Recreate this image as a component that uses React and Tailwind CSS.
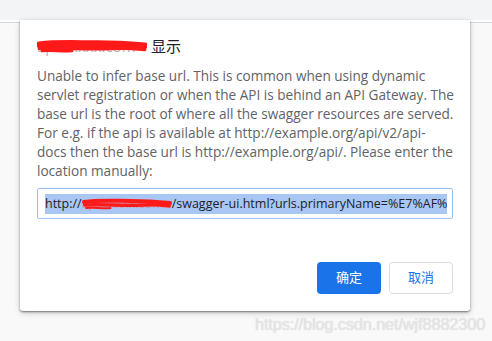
import React from "react";

const font = { fontFamily: '"Open Sans", "Noto Sans CJK SC", sans-serif' };

function Scribble({ className, thick }) {
  const w = thick ? 1.4 : 1;
  return (
    <svg className={className} viewBox="0 0 110 14" preserveAspectRatio="none">
      <path d="M2 5 C 20 3, 40 4, 60 4 S 95 5, 108 6" stroke="#ff1a1a" strokeWidth={4 * w} fill="none" strokeLinecap="round" />
      <path d="M3 8 C 25 7, 50 9, 75 8 S 100 9, 107 9" stroke="#ff1a1a" strokeWidth={3.5 * w} fill="none" strokeLinecap="round" />
      <path d="M5 11 C 15 10, 25 12, 35 11" stroke="#ff1a1a" strokeWidth={2 * w} fill="none" strokeLinecap="round" />
    </svg>
  );
}

const lines = [
  "Unable to infer base url. This is common when using dynamic",
  "servlet registration or when the API is behind an API Gateway. The",
  "base url is the root of where all the swagger resources are served.",
  "For e.g. if the api is available at http://example.org/api/v2/api-",
  "docs then the base url is http://example.org/api/. Please enter the",
  "location manually:",
];

export default function App() {
  return (
    <div className="relative w-[492px] h-[341px] overflow-hidden bg-[#f9f9f9]" style={font}>
      <div className="h-[20px] bg-[#f3f4f5]" />
      <div className="h-[3px] bg-white border-b border-[#d6d6d6]" />

      <div className="absolute left-[20px] top-[20px] w-[450px] h-[291px] bg-white rounded-b-[3px] shadow-[0_1px_2px_rgba(0,0,0,0.45),0_2px_6px_rgba(0,0,0,0.2)] flex flex-col px-[17px] pt-[16px] pb-[17px]">
        <div className="flex items-center h-[21px] text-[15px] text-[#202124] leading-[21px]">
          <span className="relative inline-block w-[110px] overflow-hidden whitespace-nowrap text-[#b0b4b8]">
            api.xxxxx.com
            <Scribble thick className="absolute left-0 top-[3px] w-[110px] h-[15px]" />
          </span>
          <span className="ml-[4px]">显示</span>
        </div>
        <div className="mt-[9px] text-[13.6px] leading-[19px] text-[#5f6368]">
          {lines.map((l) => (
            <div key={l} className="whitespace-nowrap">{l}</div>
          ))}
        </div>
        <div className="mt-[8px] h-[31px] rounded-[2px] border border-[#9ec0f2] flex items-center px-[7px] overflow-hidden">
          <span className="whitespace-nowrap bg-[#a8c7f5] text-[12.5px] leading-[20px] text-[#202124] flex items-center">
            <span>http://</span>
            <span className="relative inline-block w-[90px] h-[20px] overflow-hidden text-[#c9a0a0]">
              api.xxxxx.com
              <Scribble className="absolute left-0 top-[3px] w-[90px] h-[14px]" />
            </span>
            <span>/swagger-ui.html?urls.primaryName=%E7%AF%</span>
          </span>
        </div>
        <div className="mt-auto flex justify-end gap-[8px]">
          <button className="w-[64px] h-[32px] rounded-[4px] bg-[#1a73e8] text-white text-[13px]">确定</button>
          <button className="w-[64px] h-[32px] rounded-[4px] border border-[#dadce0] bg-white text-[#1a73e8] text-[13px]">取消</button>
        </div>
      </div>

      <div className="absolute left-[255px] top-[312px] text-[16.5px] text-[#e6e6e6] tracking-[-0.2px]" style={{ fontFamily: '"Liberation Sans", sans-serif', textShadow: "0 0 1px #d0d0d0" }}>
        https://blog.csdn.net/wjf8882300
      </div>
    </div>
  );
}
